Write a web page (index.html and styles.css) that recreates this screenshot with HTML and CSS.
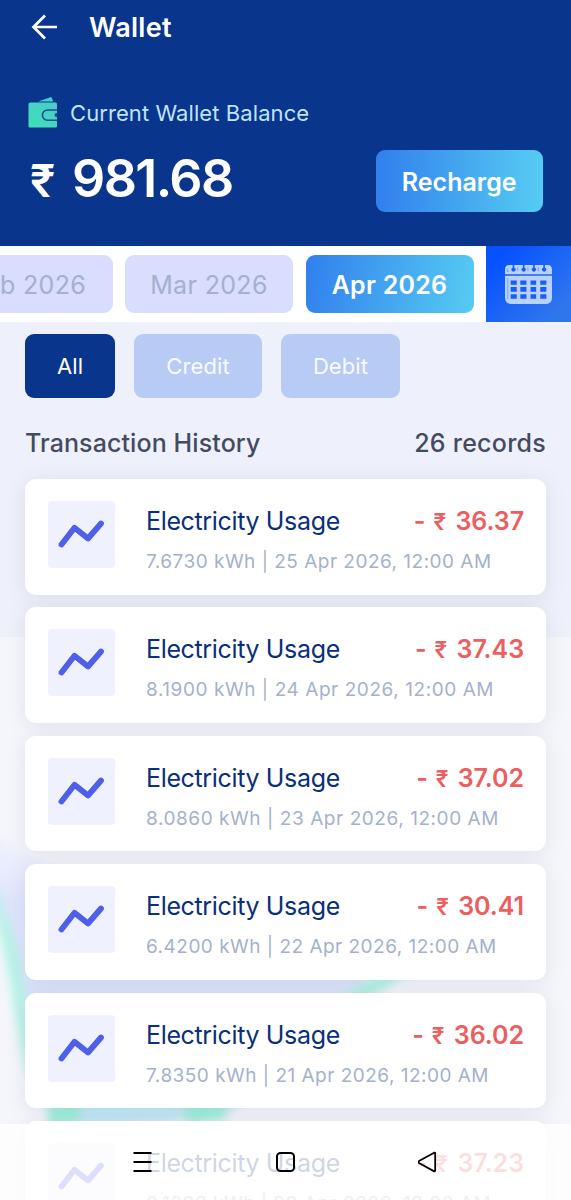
FILE: index.html
```html
<!DOCTYPE html>
<html lang="en">
<head>
<meta charset="utf-8">
<title>Wallet</title>
<link rel="stylesheet" href="styles.css">
</head>
<body>
<svg class="defs" width="0" height="0" aria-hidden="true">
  <defs>
    <linearGradient id="walletFill" x1="1" y1="0" x2="0" y2="1"><stop offset="0" stop-color="#4fc8cb"/><stop offset="1" stop-color="#3be2b9"/></linearGradient>
    <symbol id="trend" viewBox="0 0 67 67"><path d="M13.500 43.500 26.500 26.700 40 37.500 53 22.500" fill="none" stroke="#4e60ea" stroke-width="5.800" stroke-linecap="round" stroke-linejoin="round"/></symbol>
  </defs>
</svg>
<div class="screen">
  <header class="header">
    <div class="title-bar">
      <svg class="back" viewBox="0 0 28 26"><path d="M26 13H2.500M14 1.500 2.500 13 14 24.500" fill="none" stroke="#fff" stroke-width="2.700"/></svg>
      <h1 class="title">Wallet</h1>
    </div>
    <div class="balance-label">
      <svg class="wallet" viewBox="0 0 30 32"><path d="M10 5.500 22.500 1.300q1.200-.3 1.500.8l1 3.400z" fill="#45cfc8"/><path d="M2.500 6.500h25q1.500 0 1.500 1.500v22q0 1.500-1.500 1.500h-26Q.500 31.500.500 30V8q0-1.500 2-1.500z" fill="url(#walletFill)"/><path d="M29 14H19.500a5 5 0 0 0 0 10.200H29" fill="none" stroke="#144f91" stroke-width="1.600"/><path d="M29.500 17h-1a2 2 0 0 0 0 4h1z" fill="#144f91"/></svg>
      <span class="label-text">Current Wallet Balance</span>
    </div>
    <div class="balance-row">
      <div class="balance"><span class="balance-rupee">₹</span><span class="balance-value">981.68</span></div>
      <button class="recharge">Recharge</button>
    </div>
  </header>
  <nav class="months">
    <div class="month-list">
      <button class="month"><span>Feb 2026</span></button>
      <button class="month"><span>Mar 2026</span></button>
      <button class="month month-active"><span>Apr 2026</span></button>
    </div>
    <button class="calendar" aria-label="Calendar">
      <svg viewBox="0 0 48 40">
        <path d="M5 1h38q4 0 4 4.500V10H1V5.500Q1 1 5 1z" fill="#b9d2ff"/>
        <path d="M1 11.500h46v21.500q0 6-6 6H7q-6 0-6-6z" fill="#b9d2ff"/>
        <g fill="#175dfa"><path d="M8.500 0h1.600v3.500a2 2 0 1 1-1.600 0zM18.500 0h1.600v3.500a2 2 0 1 1-1.600 0zM28.500 0h1.600v3.500a2 2 0 1 1-1.600 0zM38.500 0h1.600v3.500a2 2 0 1 1-1.600 0z"/><path d="M6.500 16h6v4.300h-6zm9.500 0h6v4.300h-6zm10 0h5.500v4.300H26zm9.500 0h6v4.300h-6zM6.500 22.500h6V27h-6zm9.500 0h6V27h-6zm10 0h5.500V27H26zm9.500 0h6V27h-6zM6.500 29.500h6V34h-6zm9.500 0h6V34h-6zm10 0h5.500V34H26zm9.500 0h6V34h-6z"/></g>
        <path d="M3.700 14v20M4 4l-1 3h2M13.500 3v4m10-4v4m10-4v4" fill="none" stroke="#719df9" stroke-width=".9"/>
      </svg>
    </button>
  </nav>
  <main class="content">
    <svg class="backdrop" viewBox="0 780 571 420">
      <defs>
        <linearGradient id="blobFill" x1="0" y1="0" x2="0" y2="1"><stop offset="0" stop-color="#e3e8ff" stop-opacity="0"/><stop offset=".3" stop-color="#dfe4fd"/><stop offset=".6" stop-color="#dbe5fc"/><stop offset="1" stop-color="#bee9f4"/></linearGradient>
        <linearGradient id="strokeFill" gradientUnits="userSpaceOnUse" x1="0" y1="890" x2="0" y2="1110"><stop offset="0" stop-color="#b0f3e4" stop-opacity=".5"/><stop offset=".25" stop-color="#b4f3e6"/><stop offset="1" stop-color="#b4f3e6"/></linearGradient>
        <filter id="soft" x="-20%" y="-20%" width="140%" height="140%"><feGaussianBlur stdDeviation="5"/></filter>
      </defs>
      <g filter="url(#soft)">
        <path d="M-30 810L10 845 90 890H300L370 985 230 1112Q150 1130 60 1124 30 1085 20 1010L-12 890z" fill="url(#blobFill)"/>
        <path d="M-8 890Q10 935 20 1002 26 1045 34 1075" fill="none" stroke="url(#strokeFill)" stroke-width="13"/>
        <path d="M335 1010Q365 992 405 965" fill="none" stroke="#b2f2e4" stroke-width="17"/>
        <path d="M48 1113H80M185 1113L225 1107" fill="none" stroke="#9ef0dc" stroke-width="24"/>
      </g>
    </svg>
    <div class="filters">
      <button class="filter filter-active all">All</button>
      <button class="filter credit">Credit</button>
      <button class="filter debit">Debit</button>
    </div>
    <div class="history-head"><h2 class="history-title">Transaction History</h2><span class="records">26 records</span></div>
    <section class="list">
      <article class="card"><svg class="tile"><use href="#trend"/></svg><div class="info"><div class="line"><span class="name">Electricity Usage</span><span class="amount"><span>-</span><span class="rupee">₹</span><span>36.37</span></span></div><div class="meta">7.6730 kWh | 25 Apr 2026, 12:00 AM</div></div></article>
      <article class="card"><svg class="tile"><use href="#trend"/></svg><div class="info"><div class="line"><span class="name">Electricity Usage</span><span class="amount"><span>-</span><span class="rupee">₹</span><span>37.43</span></span></div><div class="meta meta-wide">8.1900 kWh | 24 Apr 2026, 12:00 AM</div></div></article>
      <article class="card"><svg class="tile"><use href="#trend"/></svg><div class="info"><div class="line"><span class="name">Electricity Usage</span><span class="amount"><span>-</span><span class="rupee">₹</span><span>37.02</span></span></div><div class="meta meta-wide">8.0860 kWh | 23 Apr 2026, 12:00 AM</div></div></article>
      <article class="card"><svg class="tile"><use href="#trend"/></svg><div class="info"><div class="line"><span class="name">Electricity Usage</span><span class="amount"><span>-</span><span class="rupee">₹</span><span>30.41</span></span></div><div class="meta">6.4200 kWh | 22 Apr 2026, 12:00 AM</div></div></article>
      <article class="card"><svg class="tile"><use href="#trend"/></svg><div class="info"><div class="line"><span class="name">Electricity Usage</span><span class="amount"><span>-</span><span class="rupee">₹</span><span>36.02</span></span></div><div class="meta">7.8350 kWh | 21 Apr 2026, 12:00 AM</div></div></article>
      <article class="card"><svg class="tile"><use href="#trend"/></svg><div class="info"><div class="line"><span class="name">Electricity Usage</span><span class="amount"><span>-</span><span class="rupee">₹</span><span>37.23</span></span></div><div class="meta">8.1390 kWh | 20 Apr 2026, 12:00 AM</div></div></article>
    </section>
  </main>
  <div class="system-nav">
    <svg viewBox="0 0 20 22"><path d="M.5 2h18M.5 11h18M.5 20h18" stroke="#000" stroke-width="2" fill="none"/></svg>
    <svg viewBox="0 0 20 22"><rect x="1" y="2" width="17" height="18" rx="3.500" fill="none" stroke="#000" stroke-width="2"/></svg>
    <svg viewBox="0 0 20 22"><path d="M16.200 1.700 1 10q-1.300 1 0 2l15.200 8.300q1 .3 1-.7V2.400q0-1-1-.7z" fill="none" stroke="#000" stroke-width="1.800"/></svg>
  </div>
</div>
</body>
</html>
```

FILE: styles.css
```css
* { box-sizing: border-box; }
body { margin: 0; font-family: Inter, "Liberation Sans", sans-serif; }
button { font: inherit; border: 0; padding: 0; display: flex; align-items: center; justify-content: center; white-space: nowrap; }
h1, h2 { margin: 0; }
.defs { display: block; }
.screen { position: relative; width: 571px; height: 1200px; overflow: hidden; background: #f5f6fb; }

.header { height: 246px; background: #0a358d; color: #fff; }
.title-bar { display: flex; align-items: center; height: 54px; padding-left: 31px; gap: 30px; }
.back { width: 28px; height: 26px; }
.title { padding-top: 2px; font-size: 27px; line-height: 36px; font-weight: 600; letter-spacing: .25px; }
.balance-label { display: flex; align-items: center; height: 32px; margin-top: 43px; padding-left: 28px; gap: 12px; color: #bfe3fb; }
.wallet { width: 30px; height: 32px; margin-top: -2px; }
.label-text { font-size: 22px; letter-spacing: .08px; white-space: nowrap; }
.balance-row { display: flex; justify-content: space-between; height: 62px; margin-top: 21px; padding: 0 28.500px 0 30px; }
.balance { display: flex; align-items: baseline; gap: 17px; line-height: 58px; font-weight: 600; }
.balance-rupee { font-size: 45px; width: 25px; }
.balance-value { font-size: 52px; letter-spacing: -1.600px; }
.recharge { width: 166.500px; height: 62px; padding-top: 2px; border-radius: 9px; background: linear-gradient(90deg, #317fed, #56ccf2); color: #fff; font-size: 25px; font-weight: 600; }

.months { display: flex; height: 76px; background: #fff; }
.month-list { width: 486px; display: flex; justify-content: flex-end; align-items: flex-start; gap: 12.500px; padding: 9px 12.500px 0 0; overflow: hidden; }
.month { flex: none; width: 168px; height: 57.500px; padding-top: 3px; border-radius: 9px; background: #d9ddfe; color: #a3b0d0; font-size: 25px; letter-spacing: .35px; }
.month-active { background: linear-gradient(100deg, #317fed, #56ccf2); color: #fff; font-weight: 600; letter-spacing: .25px; }
.calendar { width: 85px; background: linear-gradient(135deg, #0652ff 15%, #2f76ed 85%); }
.calendar svg { width: 49px; height: 41px; }

.content { height: 878px; padding: 12px 25px 0; background: linear-gradient(#eef1fb 0 315px, transparent 315px); }
.backdrop { position: absolute; left: 0; top: 780px; width: 571px; height: 420px; }
.filters { position: relative; display: flex; gap: 19px; height: 64px; }
.filter { border-radius: 9px; background: #b8cbf4; color: #f7faff; font-size: 22px; letter-spacing: .1px; }
.filter-active { background: #0a358d; color: #fff; }
.all { width: 90px; }
.credit { width: 128px; }
.debit { width: 119px; }
.history-head { position: relative; display: flex; justify-content: space-between; align-items: center; height: 44px; margin-top: 23px; color: #444b61; }
.history-title, .records { font-size: 25px; font-weight: 500; white-space: nowrap; }
.history-title { letter-spacing: .1px; }
.records { letter-spacing: .25px; }
.list { position: relative; display: grid; gap: 12.800px; margin-top: 14px; }
.card { display: flex; height: 115.600px; padding: 22px 22px 0 22.500px; border-radius: 11px; background: #fff; box-shadow: 0 3px 20px rgba(110,115,140,.14); }
.tile { flex: none; width: 67px; height: 67px; border-radius: 4px; background: #f0f1ff; }
.info { flex: 1; min-width: 0; margin-left: 31.500px; }
.line { display: flex; justify-content: space-between; height: 39px; line-height: 40px; font-size: 25px; white-space: nowrap; }
.name { color: #0a2f7b; letter-spacing: -.35px; }
.amount { display: flex; align-items: baseline; gap: 8px; color: #ec5e60; font-weight: 600; letter-spacing: -.05px; }
.rupee { font-size: 22.500px; width: 14px; }
.meta { height: 30px; margin-top: 7px; line-height: 30px; font-size: 19px; color: #a5b1cb; white-space: nowrap; letter-spacing: .48px; }
.meta-wide { letter-spacing: .56px; }

.system-nav { position: absolute; left: 0; right: 0; bottom: 0; height: 76px; display: flex; justify-content: space-between; padding: 27px 133px; background: rgba(255,255,255,.8); }
.system-nav svg { width: 20px; height: 22px; }
```
